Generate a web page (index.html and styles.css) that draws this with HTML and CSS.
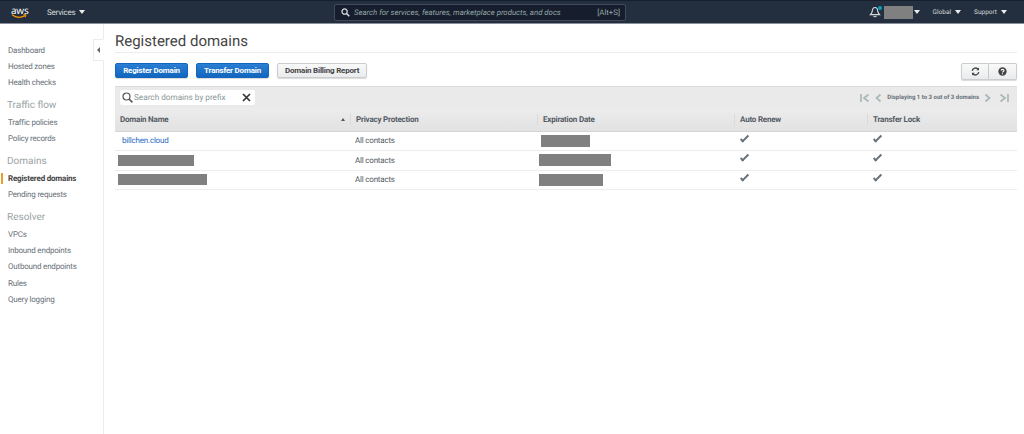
FILE: index.html
```html
<!DOCTYPE html>
<html lang="en">

<head>
    <meta charset="UTF-8">
    <title>Registered domains</title>
    <link rel="stylesheet" href="styles.css">
</head>

<body>

    <header class="topnav">
        <div class="logo">
            <span class="logo-text">aws</span>
            <svg class="logo-smile" width="16" height="5" viewBox="0 0 16 5"><path d="M1 0.8C5 3.8 10 3.8 14 1.6" fill="none" stroke="#f90" stroke-width="1.2"/><path d="M12.4 0.6L15 0.8L14.2 3.2" fill="none" stroke="#f90" stroke-width="1"/></svg>
        </div>
        <div class="nav-item services">Services <span class="caret"></span></div>
        <div class="global-search">
            <svg width="9" height="9" viewBox="0 0 10 10"><circle cx="4" cy="4" r="2.9" fill="none" stroke="#d5dbdb" stroke-width="1.4"/><path d="M6.2 6.2L9.2 9.2" stroke="#d5dbdb" stroke-width="1.7"/></svg>
            <span class="search-hint">Search for services, features, marketplace products, and docs</span>
            <span class="search-key">[Alt+S]</span>
        </div>
        <div class="nav-right">
            <div class="bell">
                <svg width="12" height="12" viewBox="0 0 12 12"><path d="M6 1.5C3.8 1.5 3.4 3.4 3.2 5.4C3.1 6.8 2.4 7.6 1.4 8.6H10.6C9.6 7.6 8.9 6.8 8.8 5.4C8.6 3.4 8.2 1.5 6 1.5Z" fill="none" stroke="#d5dbdb" stroke-width="1.1"/><path d="M4.6 9.8C5 11 7 11 7.4 9.8" fill="none" stroke="#d5dbdb" stroke-width="1.1"/></svg>
                <span class="bell-dot"></span>
            </div>
            <div class="nav-item account"><span class="redact account-name"></span><span class="caret"></span></div>
            <div class="nav-item small">Global <span class="caret"></span></div>
            <div class="nav-item small">Support <span class="caret"></span></div>
        </div>
    </header>

    <div class="page">
        <nav class="sidebar">
            <div class="collapse"><span class="collapse-arrow"></span></div>
            <a class="side-link">Dashboard</a>
            <a class="side-link">Hosted zones</a>
            <a class="side-link">Health checks</a>
            <h3>Traffic flow</h3>
            <a class="side-link">Traffic policies</a>
            <a class="side-link">Policy records</a>
            <h3>Domains</h3>
            <a class="side-link active">Registered domains</a>
            <a class="side-link">Pending requests</a>
            <h3>Resolver</h3>
            <a class="side-link">VPCs</a>
            <a class="side-link">Inbound endpoints</a>
            <a class="side-link">Outbound endpoints</a>
            <a class="side-link">Rules</a>
            <a class="side-link">Query logging</a>
        </nav>

        <main class="content">
            <h1>Registered domains</h1>

            <div class="actions">
                <button class="btn primary">Register Domain</button>
                <button class="btn primary">Transfer Domain</button>
                <button class="btn">Domain Billing Report</button>
                <div class="btn-group">
                    <button class="btn icon-btn">
                        <svg width="9" height="9" viewBox="0 0 10 10"><path d="M1.4 4.2A3.7 3.7 0 0 1 8 2.6" fill="none" stroke="#444" stroke-width="1.5"/><path d="M8.9 0.6V3.6H5.9Z" fill="#444"/><path d="M8.6 5.8A3.7 3.7 0 0 1 2 7.4" fill="none" stroke="#444" stroke-width="1.5"/><path d="M1.1 9.4V6.4H4.1Z" fill="#444"/></svg>
                    </button>
                    <button class="btn icon-btn">
                        <svg width="9" height="9" viewBox="0 0 10 10"><circle cx="5" cy="5" r="4.6" fill="#444"/><path d="M3.4 3.9C3.5 2.2 6.7 2.2 6.7 3.9C6.7 5 5 5 5 6.2" fill="none" stroke="#fff" stroke-width="1.2"/><rect x="4.4" y="7" width="1.2" height="1.2" fill="#fff"/></svg>
                    </button>
                </div>
            </div>

            <div class="toolbar">
                <div class="filter">
                    <svg width="11" height="11" viewBox="0 0 11 11"><circle cx="4.5" cy="4.5" r="3.5" fill="none" stroke="#555" stroke-width="1.2"/><path d="M7 7L10.4 10.4" stroke="#555" stroke-width="1.6"/></svg>
                    <span class="filter-hint">Search domains by prefix</span>
                    <svg class="filter-clear" width="9" height="9" viewBox="0 0 9 9"><path d="M1 1L8 8M8 1L1 8" stroke="#333" stroke-width="1.7"/></svg>
                </div>
                <div class="pager">
                    <svg width="10" height="10" viewBox="0 0 10 10"><path d="M1 1V9M8.5 1.5L4 5L8.5 8.5" fill="none" stroke="#aab7b8" stroke-width="1.7"/></svg>
                    <svg class="pager-prev" width="7" height="10" viewBox="0 0 7 10"><path d="M5.5 1.5L1.5 5L5.5 8.5" fill="none" stroke="#aab7b8" stroke-width="1.7"/></svg>
                    <span class="pager-text">Displaying 1 to 3 out of 3 domains</span>
                    <svg class="pager-next" width="7" height="10" viewBox="0 0 7 10"><path d="M1.5 1.5L5.5 5L1.5 8.5" fill="none" stroke="#aab7b8" stroke-width="1.7"/></svg>
                    <svg width="10" height="10" viewBox="0 0 10 10"><path d="M9 1V9M1.5 1.5L6 5L1.5 8.5" fill="none" stroke="#aab7b8" stroke-width="1.7"/></svg>
                </div>
            </div>

            <table class="domains">
                <colgroup>
                    <col class="col-name">
                    <col class="col-privacy">
                    <col class="col-date">
                    <col class="col-renew">
                    <col>
                </colgroup>
                <thead>
                    <tr>
                        <th class="first">Domain Name<span class="sort"></span></th>
                        <th>Privacy Protection</th>
                        <th>Expiration Date</th>
                        <th>Auto Renew</th>
                        <th>Transfer Lock</th>
                    </tr>
                </thead>
                <tbody>
                    <tr>
                        <td class="first"><a class="domain-link">billchen.cloud</a></td>
                        <td>All contacts</td>
                        <td><span class="redact date-1"></span></td>
                        <td><span class="check"></span></td>
                        <td><span class="check"></span></td>
                    </tr>
                    <tr>
                        <td class="first"><span class="redact name-2"></span></td>
                        <td>All contacts</td>
                        <td><span class="redact date-2"></span></td>
                        <td><span class="check"></span></td>
                        <td><span class="check"></span></td>
                    </tr>
                    <tr>
                        <td class="first"><span class="redact name-3"></span></td>
                        <td>All contacts</td>
                        <td><span class="redact date-3"></span></td>
                        <td><span class="check"></span></td>
                        <td><span class="check"></span></td>
                    </tr>
                </tbody>
            </table>
        </main>
    </div>

</body>

</html>
```

FILE: styles.css
```css
* {
    box-sizing: border-box;
}

html,
body {
    height: 100%;
}

body {
    margin: 0;
    background: #fff;
    font-family: Roboto, sans-serif;
    font-size: 8px;
    letter-spacing: -0.2px;
    text-rendering: geometricPrecision;
    color: #444;
    overflow: hidden;
}

.topnav {
    height: 24px;
    background: #232f3e;
    border-top: 1px solid #161e2d;
    border-bottom: 1px solid #8a9099;
    display: flex;
    align-items: center;
    color: #d5dbdb;
}

.logo {
    width: 47px;
    padding-left: 11px;
    display: flex;
    flex-direction: column;
    line-height: 8px;
}

.logo-text {
    color: #fff;
    font-size: 10px;
    font-family: "Open Sans", sans-serif;
}

.logo-smile {
    display: block;
}

.nav-item {
    display: flex;
    align-items: center;
    gap: 3px;
    white-space: nowrap;
}

.services {
    width: 287px;
}

.caret {
    display: inline-block;
    border-left: 3px solid transparent;
    border-right: 3px solid transparent;
    border-top: 4px solid #eaeded;
}

.global-search {
    width: 292px;
    height: 17px;
    margin-top: 1px;
    background: #161e2d;
    border: 1px solid #414b58;
    border-radius: 2px;
    display: flex;
    align-items: center;
    padding: 0 5px 0 6px;
    letter-spacing: 0;
    font-size: 7.8px;
    color: #95a5a6;
}

.search-hint {
    margin-left: 4px;
    font-style: italic;
    flex: 1;
    white-space: nowrap;
}

.nav-right {
    margin-left: auto;
    display: flex;
    align-items: center;
    padding-right: 17px;
}

.bell {
    position: relative;
    width: 12px;
    height: 12px;
    margin-right: 3px;
}

.bell svg {
    display: block;
}

.bell-dot {
    position: absolute;
    top: 0;
    right: -1px;
    width: 4px;
    height: 4px;
    border-radius: 50%;
    background: #00a1c9;
}

.account {
    gap: 1px;
    margin-right: 13px;
}

.account-name {
    width: 29px;
    height: 13px;
}

.small {
    font-size: 6.5px;
    letter-spacing: 0;
    gap: 4px;
    margin-right: 13px;
}

.small:last-child {
    margin-right: 0;
}

.redact {
    display: block;
    background: #808080;
}

.page {
    display: flex;
    height: calc(100% - 24px);
}

.sidebar {
    position: relative;
    flex: 0 0 104px;
    border-right: 1px solid #eaeded;
    padding-top: 19px;
}

.collapse {
    position: absolute;
    top: 15px;
    right: -1px;
    width: 11px;
    height: 22px;
    background: #fff;
    border: 1px solid #eaeded;
    border-right-color: #fff;
    display: flex;
    align-items: center;
    justify-content: center;
}

.collapse-arrow {
    border-top: 3px solid transparent;
    border-bottom: 3px solid transparent;
    border-right: 3px solid #666;
}

.side-link {
    display: block;
    height: 16.2px;
    line-height: 16px;
    padding-left: 8px;
    color: #687078;
    white-space: nowrap;
}

.side-link.active {
    position: relative;
    color: #444;
    font-weight: 700;
}

.side-link.active::before {
    content: "";
    position: absolute;
    left: 1px;
    top: 2px;
    width: 2px;
    height: 11px;
    background: #ec9c2b;
}

.sidebar h3 {
    margin: 0;
    padding: 7px 0 0 7px;
    height: 23.6px;
    line-height: 14px;
    font-size: 10px;
    letter-spacing: 0;
    font-weight: 400;
    color: #9aa3a5;
}

.content {
    flex: 1;
    padding: 0 7px 0 11px;
}

.content h1 {
    margin: 0;
    height: 29px;
    padding-top: 7px;
    border-bottom: 1px solid #eaeded;
    font-size: 15px;
    letter-spacing: 0;
    line-height: 20px;
    font-weight: 400;
    color: #444;
}

.actions {
    display: flex;
    align-items: flex-start;
    gap: 8px;
    margin-top: 10px;
    height: 15px;
}

.btn {
    height: 15px;
    padding: 0 7px;
    border: 1px solid #ccc;
    border-radius: 2px;
    background: linear-gradient(#f9f9f9, #e9ebed);
    box-shadow: 0 1px 1px rgba(0, 0, 0, 0.15);
    font-family: Roboto, sans-serif;
    font-size: 8px;
    letter-spacing: -0.2px;
    font-weight: 700;
    color: #444;
    white-space: nowrap;
}

.primary {
    padding: 0;
    background: linear-gradient(#2a7fd5, #1266bd);
    border-color: #1266bd;
    color: #fff;
    width: 73px;
}

.btn-group {
    margin-left: auto;
    display: flex;
}

.icon-btn {
    width: 28px;
    height: 17px;
    padding: 0;
    display: flex;
    align-items: center;
    justify-content: center;
    border-radius: 0;
}

.icon-btn:first-child {
    border-radius: 2px 0 0 2px;
}

.icon-btn:last-child {
    border-left: 0;
    border-radius: 0 2px 2px 0;
}

.toolbar {
    margin-top: 8px;
    height: 22px;
    background: #eaeaea;
    border-top: 1px solid #dcdcdc;
    display: flex;
    align-items: center;
    padding: 0 8px 0 5px;
}

.filter {
    width: 135px;
    height: 15px;
    background: #fff;
    border-radius: 2px;
    display: flex;
    align-items: center;
    padding: 0 4px 0 2px;
}

.filter-hint {
    margin-left: 1px;
    flex: 1;
    font-size: 8.2px;
    letter-spacing: 0;
    color: #879596;
    white-space: nowrap;
}

.pager {
    margin-left: auto;
    display: flex;
    align-items: center;
    gap: 5px;
    font-size: 6px;
    letter-spacing: 0;
    font-weight: 700;
    color: #687078;
}

.pager-next {
    margin-right: 3px;
}

.domains {
    width: 100%;
    table-layout: fixed;
    border-collapse: collapse;
}

.col-name {
    width: 235px;
}

.col-privacy {
    width: 187px;
}

.col-date {
    width: 197px;
}

.col-renew {
    width: 133px;
}

.domains th {
    position: relative;
    height: 23px;
    padding: 0 0 0 6px;
    background: linear-gradient(#ececec, #e2e2e2);
    border-bottom: 1px solid #d5d5d5;
    text-align: left;
    font-weight: 700;
    color: #545b64;
}

.domains th:not(.first)::before {
    content: "";
    position: absolute;
    left: 0;
    top: 6px;
    height: 11px;
    border-left: 1px solid #dadada;
}

.domains th.first {
    padding-left: 5px;
}

.sort {
    position: absolute;
    right: 5px;
    top: 10px;
    border-left: 2px solid transparent;
    border-right: 2px solid transparent;
    border-bottom: 3px solid #555;
}

.domains td {
    height: 19.5px;
    padding: 0 0 0 5px;
    border-bottom: 1px solid #eaeded;
    color: #545b64;
}

.domains td.first {
    padding-left: 3px;
}

.domain-link {
    margin-left: 4px;
    color: #2e6bc4;
}

.check {
    display: block;
    width: 9px;
    height: 4px;
    margin: -5px 0 0 1px;
    border-left: 2px solid #687078;
    border-bottom: 2px solid #687078;
    transform: rotate(-45deg);
}

.name-2 {
    width: 76px;
    height: 11px;
}

.name-3 {
    width: 89px;
    height: 11px;
}

.date-1 {
    width: 49px;
    height: 12px;
    margin-left: -1px;
}

.date-2 {
    width: 72px;
    height: 12px;
    margin-left: -3px;
}

.date-3 {
    width: 64px;
    height: 12px;
    margin-left: -3px;
}
```
